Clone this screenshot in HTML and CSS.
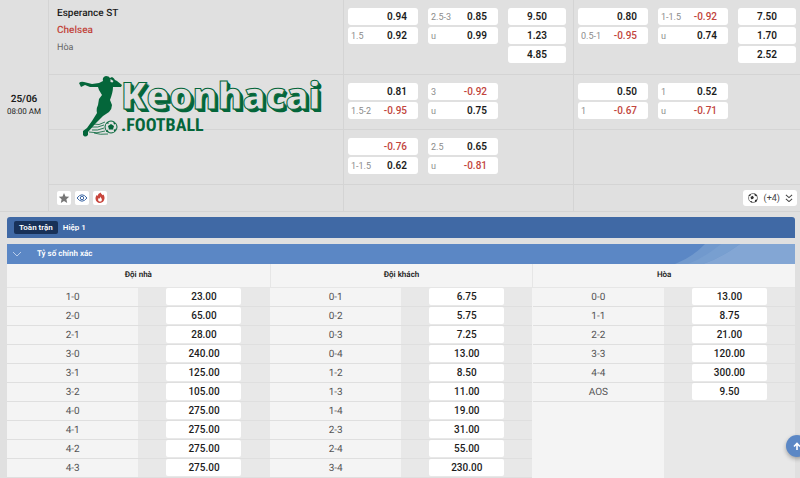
FILE: index.html
```html
<!DOCTYPE html>
<html lang="vi">
<head>
    <meta charset="UTF-8">
    <meta name="viewport" content="width=device-width, initial-scale=1.0">
    <title>Esperance ST - Chelsea</title>
    <link rel="stylesheet" href="styles.css">
</head>
<body>
    <section class="match">
        <div class="match-time">
            <b>25/06</b>
            <span>08:00 AM</span>
        </div>

        <!-- Hàng 1 -->
        <div class="teams">
            <b>Esperance ST</b>
            <span class="away">Chelsea</span>
            <span class="draw">Hòa</span>
        </div>
        <div class="odds">
            <div class="odds-col">
                <button class="odd"><b>0.94</b></button>
                <button class="odd"><i>1.5</i><b>0.92</b></button>
            </div>
            <div class="odds-col">
                <button class="odd"><i>2.5-3</i><b>0.85</b></button>
                <button class="odd"><i>u</i><b>0.99</b></button>
            </div>
            <div class="odds-col">
                <button class="odd single"><b>9.50</b></button>
                <button class="odd single"><b>1.23</b></button>
                <button class="odd single"><b>4.85</b></button>
            </div>
        </div>
        <div class="odds">
            <div class="odds-col">
                <button class="odd"><b>0.80</b></button>
                <button class="odd"><i>0.5-1</i><b class="neg">-0.95</b></button>
            </div>
            <div class="odds-col">
                <button class="odd"><i>1-1.5</i><b class="neg">-0.92</b></button>
                <button class="odd"><i>u</i><b>0.74</b></button>
            </div>
            <div class="odds-col">
                <button class="odd single"><b>7.50</b></button>
                <button class="odd single"><b>1.70</b></button>
                <button class="odd single"><b>2.52</b></button>
            </div>
        </div>

        <!-- Hàng 2 -->
        <div class="blank"></div>
        <div class="odds">
            <div class="odds-col">
                <button class="odd"><b>0.81</b></button>
                <button class="odd"><i>1.5-2</i><b class="neg">-0.95</b></button>
            </div>
            <div class="odds-col">
                <button class="odd"><i>3</i><b class="neg">-0.92</b></button>
                <button class="odd"><i>u</i><b>0.75</b></button>
            </div>
        </div>
        <div class="odds">
            <div class="odds-col">
                <button class="odd"><b>0.50</b></button>
                <button class="odd"><i>1</i><b class="neg">-0.67</b></button>
            </div>
            <div class="odds-col">
                <button class="odd"><i>1</i><b>0.52</b></button>
                <button class="odd"><i>u</i><b class="neg">-0.71</b></button>
            </div>
        </div>

        <!-- Hàng 3 -->
        <div class="blank"></div>
        <div class="odds">
            <div class="odds-col">
                <button class="odd"><b class="neg">-0.76</b></button>
                <button class="odd"><i>1-1.5</i><b>0.62</b></button>
            </div>
            <div class="odds-col">
                <button class="odd"><i>2.5</i><b>0.65</b></button>
                <button class="odd"><i>u</i><b class="neg">-0.81</b></button>
            </div>
        </div>
        <div class="odds"></div>

        <!-- Hàng công cụ -->
        <div class="tools first">
            <button class="tool" aria-label="Yêu thích">
                <svg viewBox="0 0 14 14"><path fill="#777" d="M7 2l1.5 3.400 3.700.4-2.800 2.400.8 3.700L7 10l-3.200 1.900.8-3.700-2.800-2.400 3.700-.4z"/></svg>
            </button>
            <button class="tool" aria-label="Xem trực tiếp">
                <svg viewBox="0 0 14 14" fill="none" stroke="#3e68a5"><path d="M2 7Q7 .6 12 7 7 13.400 2 7z"/><circle cx="7" cy="7" r="1.700"/></svg>
            </button>
            <button class="tool" aria-label="Trận hot">
                <svg viewBox="0 0 14 14"><path fill="#c8453c" d="M7.600 1.500c.3 1.200 1.400 1.800 2 2.800l.8-.8c.8 1.200 1.300 2.600 1.100 4.100-.3 2.600-2.100 4.400-4.500 4.400S2.700 10.200 2.500 7.700c-.1-1.400.5-2.800 1.300-3.700l.8.900c.4-1.700 1.500-2.600 3-3.400z"/><path fill="#fff" d="M7.200 5.500c.2 1.100 1.700 1.700 1.700 3.200 0 1.200-.8 1.900-1.900 1.900s-1.900-.8-1.900-1.900c0-.7.3-1.200.7-1.600l.6.700c.5-.6.8-1.300.8-2.300z"/></svg>
            </button>
        </div>
        <div class="tools"></div>
        <div class="tools end">
            <button class="more">
                <svg class="ball" viewBox="0 0 12 12"><circle cx="6" cy="6" r="4.500" fill="none" stroke="#666" stroke-width=".8"/><path fill="#333" d="M3.500 5l2-1.200 1.400 1.400-.8 1.900-2 .1zM1.300 4l1.700-2 1 .4-.8 1.600zM7.500 1.300l2.800 2-1 1.100-1.800-1.200zM8 8l2.300-.8-.8 2.500-1.700.6zM3 9l2 .2.300 1.300-1.300-.3z"/></svg>
                <span>(+4)</span>
                <svg class="chevrons" viewBox="0 0 9 10" fill="none" stroke="#444" stroke-width="1.200"><path d="M1 1l3.500 3L8 1M1 5.500l3.500 3L8 5.500"/></svg>
            </button>
        </div>

        <div class="logo">
            <svg class="player" viewBox="0 0 46 62">
                <path fill="#04663a" d="M1 8q2-2 5-1l8 2 7-1 4-2q-1-4 3-5 3 0 4 2l2-1q2 1 3 3l2 1 5 4-1 2-8 0q0 5-3 13l2 5q0 4-3 7l-6 4-8 8-7 8 0 3q-3 3-5 0l0-4 4-3 5-7 5-8q-1-4 1-8l1-6 3-4-3-5-1-3-8 0-5-2-4 2z"/>
                <path fill="#e0e0e0" d="M32.500 4l3 2-1 1.500-2-.5z"/>
                <circle cx="33" cy="52" r="6" fill="none" stroke="#04663a"/>
                <path fill="#04663a" d="M33 49l3 2-1 3.500h-4L30 51zM35 46.500l3 2.500-2 .5zM28 48l2.500-1.500v2.500zM37 57l1-3.500-2.500 1.500zM28 57l1-2.500 2 2.500z"/>
                <path fill="none" stroke="#04663a" stroke-width=".8" d="M27 47Q21 51 15 49M26 50q-6 3-13 2M26 53q-7 3-12 2M27 56q-8 3-16 1M30 59q-8 1-14-1"/>
            </svg>
            <div class="logo-text">
                <span class="logo-name">Keonhacai</span>
                <span class="logo-sub">.FOOTBALL</span>
            </div>
        </div>
    </section>

    <nav class="tabs">
        <button class="tab active">Toàn trận</button>
        <button class="tab">Hiệp 1</button>
    </nav>

    <section class="market">
        <h2 class="market-title">
            <svg class="arrow" viewBox="0 0 10 6" fill="none" stroke="#b9cdea"><path d="M1 1l4 4 4-4"/></svg>
            Tỷ số chính xác
            <svg class="stripes" viewBox="0 0 126 20" preserveAspectRatio="none"><path fill="#7199cd" d="M6 20Q24 13 36 0h90v20z"/><path fill="#83a6d4" d="M34 20Q52 14 71 0h55v20z"/><path fill="#789fd0" d="M19 20Q35 14 52 0h19Q52 14 34 20z"/></svg>
        </h2>
        <div class="scores">
            <table class="score-table">
                <thead><tr><th colspan="2">Đội nhà</th></tr></thead>
                <tbody>
                    <tr><td>1-0</td><td><button class="price">23.00</button></td></tr>
                    <tr><td>2-0</td><td><button class="price">65.00</button></td></tr>
                    <tr><td>2-1</td><td><button class="price">28.00</button></td></tr>
                    <tr><td>3-0</td><td><button class="price">240.00</button></td></tr>
                    <tr><td>3-1</td><td><button class="price">125.00</button></td></tr>
                    <tr><td>3-2</td><td><button class="price">105.00</button></td></tr>
                    <tr><td>4-0</td><td><button class="price">275.00</button></td></tr>
                    <tr><td>4-1</td><td><button class="price">275.00</button></td></tr>
                    <tr><td>4-2</td><td><button class="price">275.00</button></td></tr>
                    <tr><td>4-3</td><td><button class="price">275.00</button></td></tr>
                </tbody>
            </table>
            <table class="score-table">
                <thead><tr><th colspan="2">Đội khách</th></tr></thead>
                <tbody>
                    <tr><td>0-1</td><td><button class="price">6.75</button></td></tr>
                    <tr><td>0-2</td><td><button class="price">5.75</button></td></tr>
                    <tr><td>0-3</td><td><button class="price">7.25</button></td></tr>
                    <tr><td>0-4</td><td><button class="price">13.00</button></td></tr>
                    <tr><td>1-2</td><td><button class="price">8.50</button></td></tr>
                    <tr><td>1-3</td><td><button class="price">11.00</button></td></tr>
                    <tr><td>1-4</td><td><button class="price">19.00</button></td></tr>
                    <tr><td>2-3</td><td><button class="price">31.00</button></td></tr>
                    <tr><td>2-4</td><td><button class="price">55.00</button></td></tr>
                    <tr><td>3-4</td><td><button class="price">230.00</button></td></tr>
                </tbody>
            </table>
            <table class="score-table">
                <thead><tr><th colspan="2">Hòa</th></tr></thead>
                <tbody>
                    <tr><td>0-0</td><td><button class="price">13.00</button></td></tr>
                    <tr><td>1-1</td><td><button class="price">8.75</button></td></tr>
                    <tr><td>2-2</td><td><button class="price">21.00</button></td></tr>
                    <tr><td>3-3</td><td><button class="price">120.00</button></td></tr>
                    <tr><td>4-4</td><td><button class="price">300.00</button></td></tr>
                    <tr><td>AOS</td><td><button class="price">9.50</button></td></tr>
                </tbody>
            </table>
        </div>
    </section>

    <button class="to-top" aria-label="Lên đầu trang">
        <svg viewBox="0 0 8 8" fill="none" stroke="#fff" stroke-width="1.600"><path d="M4 8V1.500M1 4.500l3-3 3 3"/></svg>
    </button>
</body>
</html>
```

FILE: styles.css
```css
:root {
    --bg: #e0e0e0;
    --line: #d4d4d4;
    --text: #1c1c1c;
    --muted: #8c8c8c;
    --red: #c2453d;
    --blue: #4069a5;
    --light-blue: #5b87c5;
    --green: #04663a;
}

* {
    box-sizing: border-box;
}

body {
    margin: 0;
    background: var(--bg);
    color: var(--text);
    font: 10px/12px Roboto, "Liberation Sans", sans-serif;
    text-rendering: geometricPrecision;
}

button {
    border: none;
    padding: 0;
    background: white;
    color: inherit;
    font: inherit;
    cursor: pointer;
}

b {
    font-weight: 600;
}

svg {
    display: block;
}

/* match */
.match {
    position: relative;
    display: grid;
    grid-template-columns: 49px 294fr 230fr 227fr;
    grid-template-rows: 75px 55px 55px 26px;
    border-bottom: 1px solid var(--line);
}

.match-time {
    grid-row: 1 / 5;
    display: flex;
    flex-direction: column;
    justify-content: center;
    border-right: 1px solid var(--line);
    text-align: center;
}

.match-time span {
    font-size: 8px;
}

.teams,
.blank,
.odds {
    border-bottom: 1px solid var(--line);
}

.odds,
.tools {
    border-left: 1px solid var(--line);
}

.tools.first {
    border-left: none;
}

.teams {
    display: flex;
    flex-direction: column;
    gap: 5px;
    padding: 8px;
}

.teams b {
    font-weight: 500;
}

.away {
    color: var(--red);
    font-weight: 500;
}

.draw {
    color: #666;
    font-size: 9px;
}

.odds {
    display: grid;
    grid-template-columns: 70px 70px 58px;
    column-gap: 10px;
    padding: 8px 4px;
}

.odds-col {
    display: flex;
    flex-direction: column;
    gap: 2px;
}

.odd {
    display: flex;
    align-items: center;
    justify-content: space-between;
    height: 17px;
    padding: 0 11px 0 3px;
    border-radius: 3px;
}

.odd b {
    margin-left: auto;
}

.odd i {
    color: var(--muted);
    font-size: 9px;
    font-style: normal;
}

.odd.single {
    padding: 0;
}

.single b {
    margin: 0 auto;
}

.odd .neg {
    color: var(--red);
    font-weight: 500;
}

.tools {
    display: flex;
    align-items: center;
    gap: 4px;
    padding: 0 8px;
}

.tool {
    width: 14px;
    height: 14px;
    border-radius: 2px;
}

.end {
    justify-content: flex-end;
    padding: 0 3px;
}

.more {
    display: flex;
    align-items: center;
    gap: 5px;
    height: 16px;
    padding: 0 4px;
    border-radius: 3px;
    color: #444;
    font-size: 9px;
}

.ball {
    width: 12px;
}

.chevrons {
    width: 8px;
}

/* logo */
.logo {
    position: absolute;
    left: 78px;
    top: 75px;
    display: flex;
    color: var(--green);
}

.player {
    width: 46px;
    height: 62px;
}

.logo-text {
    display: flex;
    flex-direction: column;
    margin-left: -3px;
}

.logo-name {
    color: var(--bg);
    font: 800 37px/40px "Open Sans", sans-serif;
    -webkit-text-stroke: 1px var(--green);
    text-shadow: 1px 1px var(--green), 2px 2px var(--green), 3px 3px var(--green);
}

.logo-sub {
    font: bold 18px/22px "Liberation Sans Narrow", "Roboto Condensed", sans-serif;
}

/* tabs */
.tabs {
    display: flex;
    align-items: center;
    gap: 5px;
    height: 21px;
    margin: 5px 5px 6px 7px;
    padding: 0 7px;
    border-radius: 3px 3px 0 0;
    background: var(--blue);
}

.tab {
    background: none;
    color: white;
    font-size: 8px;
    font-weight: 600;
}

.tab.active {
    height: 13px;
    padding: 0 5px;
    border-radius: 2px;
    background: #183158;
}

/* market */
.market {
    margin: 0 5px 0 7px;
}

.market-title {
    position: relative;
    display: flex;
    align-items: center;
    gap: 15px;
    height: 20px;
    margin: 0;
    padding: 0 5px;
    background: var(--light-blue);
    color: white;
    font-size: 8px;
    font-weight: 600;
}

.arrow {
    width: 10px;
}

.stripes {
    position: absolute;
    right: 0;
    top: 0;
    width: 126px;
    height: 20px;
}

.scores {
    display: grid;
    grid-template-columns: repeat(3, 1fr);
    align-items: start;
    background: repeating-linear-gradient(90deg, #f4f4f4 0 16.67%, #e8e8e8 16.67% 33.33%);
}

.score-table {
    width: 100%;
    table-layout: fixed;
    border-collapse: collapse;
    text-align: center;
}

.score-table th {
    height: 23px;
    padding: 0;
    border-bottom: 1px solid #e6e6e6;
    background: #f4f4f4;
    font-size: 8px;
    font-weight: 600;
}

.score-table + .score-table th {
    border-left: 1px solid #e6e6e6;
}

.score-table td {
    height: 19px;
    padding: 0;
    border-bottom: 1px solid #dfdfdf;
    color: #555;
}

.score-table td:first-child {
    padding-top: 2px;
}

.price {
    display: block;
    width: 75px;
    height: 17px;
    margin: 0 auto;
    border-radius: 2px;
    color: var(--text);
    font-weight: 500;
}

.to-top {
    position: fixed;
    right: -8px;
    bottom: 21px;
    width: 22px;
    height: 22px;
    padding: 0 7px;
    border-radius: 50%;
    background: var(--light-blue);
    box-shadow: 0 2px 4px rgba(0, 0, 0, 0.3);
}
```
